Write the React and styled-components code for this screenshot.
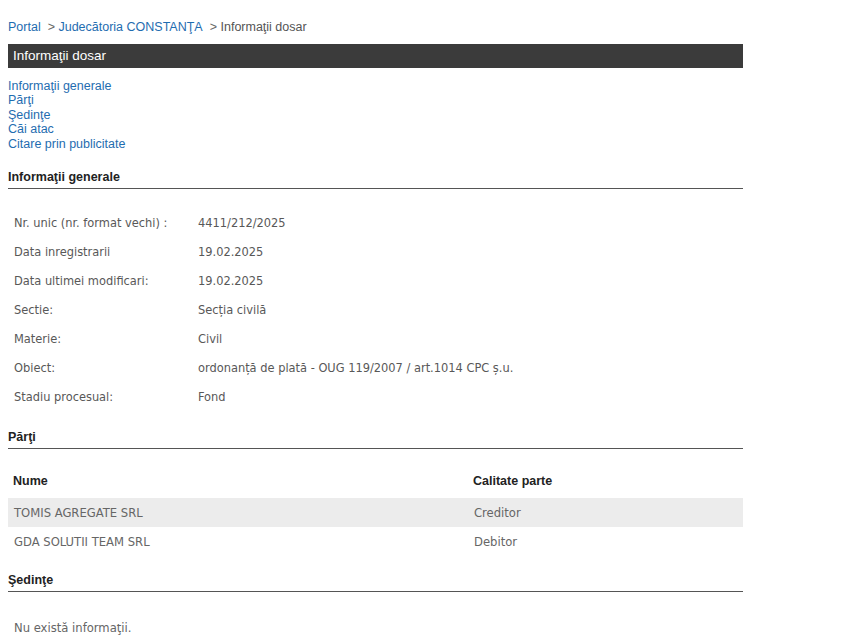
import { createGlobalStyle, styled } from "styled-components";

const GlobalStyle = createGlobalStyle`
  body {
    margin: 0;
    background: #fff;
    font-family: "Liberation Sans", Arial, sans-serif;
  }
`;

const Page = styled.div`
  width: 735px;
  padding: 19px 8px 0;
`;

const Breadcrumb = styled.div`
  font-size: 12.5px;
  line-height: 16px;
  color: #555;
`;

const Crumb = styled.a`
  color: #1f6db0;
  text-decoration: none;
`;

const Sep = styled.span`
  padding-left: 7px;
  color: #666;
`;

const TitleBar = styled.div`
  margin-top: 9px;
  height: 24px;
  line-height: 24px;
  background: #3b3b3b;
  color: #fff;
  font-size: 13.5px;
  padding-left: 5px;
`;

const NavList = styled.div`
  display: flex;
  flex-direction: column;
  margin-top: 10.5px;
`;

const NavLink = styled.a`
  color: #1f6db0;
  font-size: 12.5px;
  line-height: 14.6px;
  text-decoration: none;
  align-self: flex-start;
`;

const SectionTitle = styled.div`
  margin-top: ${(p) => p.$top}px;
  font-size: 12.5px;
  font-weight: bold;
  line-height: 16px;
  color: #222;
  padding-bottom: 3px;
  border-bottom: 1px solid #555;
`;

const InfoTable = styled.table`
  margin-top: 19px;
  width: 100%;
  border-collapse: collapse;
  font-family: "DejaVu Sans Condensed", Tahoma, sans-serif;
  font-size: 12.7px;
  color: #585858;

  td {
    height: 29px;
    padding: 0 0 0 6px;
    vertical-align: middle;
  }
  td:first-child {
    width: 178px;
  }
`;

const PartsTable = styled.table`
  margin-top: 20px;
  width: 100%;
  border-collapse: collapse;

  th {
    font-family: "Liberation Sans", Arial, sans-serif;
    font-size: 12.5px;
    color: #222;
    text-align: left;
    height: 25px;
    padding: 0 5px 4px;
    vertical-align: middle;
  }
  th:first-child {
    width: 450px;
  }
`;

const Row = styled.tr`
  background: ${(p) => (p.$shaded ? "#ececec" : "transparent")};

  td {
    font-family: "DejaVu Sans Condensed", Tahoma, sans-serif;
    font-size: 12.9px;
    color: #666;
    height: 29px;
    padding: 0 6px;
    vertical-align: middle;
  }
`;

const Empty = styled.div`
  margin-top: 28px;
  padding-left: 6px;
  font-family: "DejaVu Sans Condensed", Tahoma, sans-serif;
  font-size: 12.9px;
  line-height: 16px;
  color: #666;
`;

const info = [
  ["Nr. unic (nr. format vechi) :", "4411/212/2025"],
  ["Data inregistrarii", "19.02.2025"],
  ["Data ultimei modificari:", "19.02.2025"],
  ["Sectie:", "Secția civilă"],
  ["Materie:", "Civil"],
  ["Obiect:", "ordonanță de plată - OUG 119/2007 / art.1014 CPC ș.u."],
  ["Stadiu procesual:", "Fond"],
];

const parti = [
  ["TOMIS AGREGATE SRL", "Creditor"],
  ["GDA SOLUTII TEAM SRL", "Debitor"],
];

const App = () => {
  return (
    <>
      <GlobalStyle />
      <Page>
        <Breadcrumb>
          <Crumb href="#">Portal</Crumb>
          <Sep>&gt; </Sep>
          <Crumb href="#">Judecătoria CONSTANŢA</Crumb>
          <Sep>&gt; </Sep>
          Informaţii dosar
        </Breadcrumb>

        <TitleBar>Informaţii dosar</TitleBar>

        <NavList>
          <NavLink href="#">Informaţii generale</NavLink>
          <NavLink href="#">Părţi</NavLink>
          <NavLink href="#">Şedinţe</NavLink>
          <NavLink href="#">Căi atac</NavLink>
          <NavLink href="#">Citare prin publicitate</NavLink>
        </NavList>

        <SectionTitle $top={17.5}>Informaţii generale</SectionTitle>
        <InfoTable>
          <tbody>
            {info.map(([label, value]) => (
              <tr key={label}>
                <td>{label}</td>
                <td>{value}</td>
              </tr>
            ))}
          </tbody>
        </InfoTable>

        <SectionTitle $top={18}>Părţi</SectionTitle>
        <PartsTable>
          <thead>
            <tr>
              <th>Nume</th>
              <th>Calitate parte</th>
            </tr>
          </thead>
          <tbody>
            {parti.map(([nume, calitate], i) => (
              <Row key={nume} $shaded={i % 2 === 0}>
                <td>{nume}</td>
                <td>{calitate}</td>
              </Row>
            ))}
          </tbody>
        </PartsTable>

        <SectionTitle $top={16.5}>Şedinţe</SectionTitle>
        <Empty>Nu există informaţii.</Empty>
      </Page>
    </>
  );
};

export default App;
